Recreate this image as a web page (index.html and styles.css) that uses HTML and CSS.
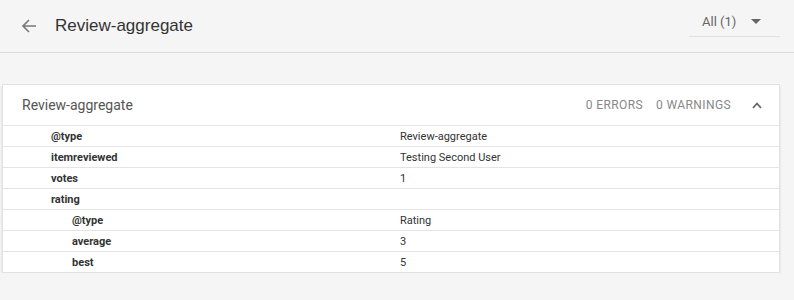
FILE: index.html
```html
<!DOCTYPE html>
<html lang="en">
<head>
    <meta charset="UTF-8">
    <meta name="viewport" content="width=device-width, initial-scale=1.0">
    <title>Review-aggregate</title>
    <link rel="stylesheet" href="styles.css">
</head>
<body>
    <div class="topbar">
        <svg class="back" width="16" height="16" viewBox="0 0 16 16">
            <path d="M15 8H2M8 2L2 8l6 6" fill="none" stroke="#777" stroke-width="1.6"/>
        </svg>
        <h1>Review-aggregate</h1>
        <div class="filter">
            <span>All (1)</span>
            <svg width="10" height="5" viewBox="0 0 10 5"><path d="M0 0h10L5 5z" fill="#666"/></svg>
        </div>
    </div>

    <div class="card">
        <div class="card-head">
            <span class="card-title">Review-aggregate</span>
            <span class="count">0 ERRORS</span>
            <span class="count">0 WARNINGS</span>
            <svg class="toggle" width="10" height="7" viewBox="0 0 10 7">
                <path d="M1 6l4-4.5 4 4.5" fill="none" stroke="#666" stroke-width="1.8"/>
            </svg>
        </div>
        <table>
            <tr><td class="key">@type</td><td>Review-aggregate</td></tr>
            <tr><td class="key">itemreviewed</td><td>Testing Second User</td></tr>
            <tr><td class="key">votes</td><td>1</td></tr>
            <tr><td class="key">rating</td><td></td></tr>
            <tr><td class="key sub">@type</td><td>Rating</td></tr>
            <tr><td class="key sub">average</td><td>3</td></tr>
            <tr><td class="key sub">best</td><td>5</td></tr>
        </table>
    </div>
</body>
</html>
```

FILE: styles.css
```css
body {
    margin: 0;
    background-color: #f5f5f5;
    font-family: Roboto, "Liberation Sans", sans-serif;
    color: #333;
}

.topbar {
    height: 52px;
    border-bottom: 1px solid #dcdcdc;
    display: flex;
    align-items: center;
    padding-left: 21px;
    padding-right: 14px;
}

.topbar .back {
    margin-right: 18px;
}

.topbar h1 {
    flex: 1;
    margin: 0;
    font-family: "Liberation Sans", Arial, sans-serif;
    font-size: 17px;
    font-weight: normal;
    color: #333;
}

.filter {
    box-sizing: border-box;
    width: 91px;
    height: 30px;
    align-self: flex-start;
    margin-top: 7px;
    padding: 0 19px 0 13px;
    border-bottom: 1px solid #e0e0e0;
    display: flex;
    align-items: center;
    justify-content: space-between;
    font-size: 13px;
    color: #666;
}

.card {
    margin: 31px 14px 0 2px;
    background-color: #fff;
    border: 1px solid #e2e2e2;
    box-shadow: 0 2px 2px rgba(0, 0, 0, 0.12);
}

.card-head {
    height: 40px;
    display: flex;
    align-items: center;
    padding: 0 17px 0 19px;
}

.card-title {
    flex: 1;
    font-size: 14px;
    color: #555;
}

.count {
    font-size: 12px;
    color: #888;
    letter-spacing: 0.4px;
    margin-right: 13px;
}

.toggle {
    margin-left: 8px;
}

table {
    width: 100%;
    border-collapse: collapse;
    font-size: 11px;
}

table td {
    height: 20px;
    padding: 0;
    border-top: 1px solid #e4e4e4;
    color: #333;
}

td.key {
    width: 349px;
    padding-left: 48px;
    font-weight: bold;
}

td.key.sub {
    padding-left: 69px;
    width: 328px;
}
```
